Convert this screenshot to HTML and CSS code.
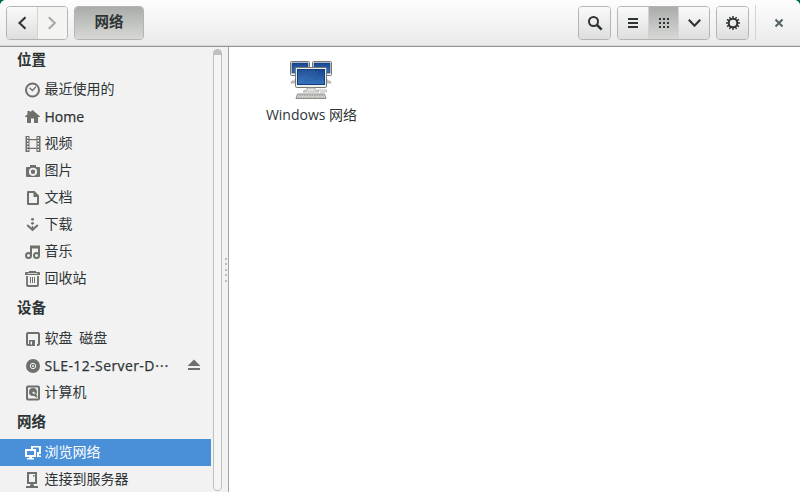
FILE: index.html
```html
<!DOCTYPE html>
<html lang="zh-CN">
<head>
<meta charset="utf-8">
<title>网络</title>
<link rel="stylesheet" href="styles.css">
</head>
<body>
<div class="window">
  <header class="toolbar">
    <div class="group nav">
      <button class="btn"><svg width="16" height="16" viewBox="0 0 16 16"><path class="line thick" d="M11.500 2.300 5.500 8l6 5.700"/></svg></button>
      <button class="btn disabled"><svg width="16" height="16" viewBox="0 0 16 16"><path class="line thick" d="M4.800 2.300 10.800 8l-6 5.700"/></svg></button>
    </div>
    <div class="group path"><button class="btn active">网络</button></div>
    <div class="spacer"></div>
    <div class="group single"><button class="btn"><svg width="16" height="16" viewBox="0 0 16 16"><circle class="line" cx="6.500" cy="6.500" r="4.500"/><path class="line handle" d="m10 10 4.700 4.700"/></svg></button></div>
    <div class="group views">
      <button class="btn"><svg width="16" height="16" viewBox="0 0 16 16"><path d="M3 3h10v2H3zM3 7h10v2H3zM3 11h10v2H3z"/></svg></button>
      <button class="btn active"><svg width="16" height="16" viewBox="0 0 16 16"><path d="M3 3h2v2H3zM7 3h2v2H7zM11 3h2v2h-2zM3 7h2v2H3zM7 7h2v2H7zM11 7h2v2h-2zM3 11h2v2H3zM7 11h2v2H7zM11 11h2v2h-2z"/></svg></button>
      <button class="btn"><svg width="16" height="16" viewBox="0 0 16 16"><path class="line thick" d="m2.800 4.800 5.700 6 5.700-6"/></svg></button>
    </div>
    <div class="group single"><button class="btn"><svg width="16" height="16" viewBox="0 0 16 16"><circle class="line" cx="8" cy="8" r="4.300"/><path class="line teeth" d="M8 1v3M8 12v3M1 8h3M12 8h3M4.500 2l1.300 2.500M11.500 2l-1.300 2.500M4.500 14l1.300-2.500M11.500 14l-1.300-2.500M2 4.500l2.500 1.300M14 4.500l-2.500 1.300M2 11.500l2.500-1.300M14 11.500l-2.500-1.300"/></svg></button></div>
    <div class="divider"></div>
    <button class="close"><svg width="16" height="16" viewBox="0 0 16 16"><path class="line" d="m4.500 4.500 7 7M11.500 4.500l-7 7"/></svg></button>
  </header>
  <div class="content">
    <aside class="sidebar">
      <nav class="places">
        <h2 class="first">位置</h2>
        <a class="place"><svg width="16" height="16" viewBox="0 0 16 16"><circle class="line" cx="7.500" cy="8" r="6.500"/><path class="line thin" d="m4.500 5.800 3 2.700 3.400-3.700"/></svg><span>最近使用的</span></a>
        <a class="place latin"><svg width="16" height="16" viewBox="0 0 16 16"><path d="M7.500 1 15 7.500V8h-2v6H9V9.500H6V14H2V8H0v-.5l2.500-2.200V2H5v1.200z"/></svg><span>Home</span></a>
        <a class="place"><svg width="16" height="16" viewBox="0 0 16 16"><path fill-rule="evenodd" d="M.5 0h4v3h7V0h4v16h-4v-3h-7v3h-4zM4.500 4.200v7.600h7V4.200zM2 1v1.500h1.500V1zm0 3v1.500h1.500V4zm0 3v1.500h1.500V7zm0 3v1.500h1.500V10zm0 3v1.500h1.500V13zm10.500-12v1.500H14V1zm0 3v1.500H14V4zm0 3v1.500H14V7zm0 3v1.500H14V10zm0 3v1.500H14V13z"/></svg><span>视频</span></a>
        <a class="place"><svg width="16" height="16" viewBox="0 0 16 16"><path fill-rule="evenodd" d="M5 2h6v2h3q1 0 1 1v8q0 1-1 1H2q-1 0-1-1V5q0-1 1-1h3zM8 4.700a4.100 4.100 0 1 0 0 8.200 4.100 4.100 0 0 0 0-8.200zm0 1.900a2.200 2.200 0 1 1 0 4.400 2.200 2.200 0 0 1 0-4.400z"/></svg><span>图片</span></a>
        <a class="place"><svg width="16" height="16" viewBox="0 0 16 16"><path fill-rule="evenodd" d="M3 1h6.500L14 5.500V14q0 1-1 1H3q-1 0-1-1V2q0-1 1-1zm1 2v10h8V7H8.500V3z"/></svg><span>文档</span></a>
        <a class="place"><svg width="16" height="16" viewBox="0 0 16 16"><path class="line" d="m2.200 8 5.300 5 5.300-5"/><circle cx="7.500" cy="2.300" r="1.400"/><circle cx="7.500" cy="6.300" r="1.400"/><path d="M6.700 9h1.600v4H6.700z"/></svg><span>下载</span></a>
        <a class="place"><svg width="16" height="16" viewBox="0 0 16 16"><path class="line" d="M6 11.500V2.500h8v9M6 3.500h8"/><circle class="line" cx="3.500" cy="11.500" r="2.500"/><circle class="line" cx="11.500" cy="11.500" r="2.500"/></svg><span>音乐</span></a>
        <a class="place"><svg width="16" height="16" viewBox="0 0 16 16"><path fill-rule="evenodd" d="M4 0h7v1h3.500l.5 1v2H0V2l.5-1H4zM2.500 2v.8h10V2zM5 6h1v6H5zM7 6h1v6H7zM9 6h1v6H9z"/><path class="line trash" d="M2 5v9q0 1 1 1h9q1 0 1-1V5"/></svg><span>回收站</span></a>
        <h2>设备</h2>
        <a class="place"><svg width="16" height="16" viewBox="0 0 16 16"><path class="line" d="M4 14H3q-1 0-1-1V3q0-1 1-1h10q1 0 1 1v10q0 1-1 1h-1"/><path fill-rule="evenodd" d="M4 9h6v6H4zm1.500 1.500v3H7v-3z"/></svg><span class="spaced">软盘 磁盘</span></a>
        <a class="place latin"><svg width="16" height="16" viewBox="0 0 16 16"><circle cx="8" cy="8" r="7"/><circle class="ring" cx="8" cy="8" r="2.700"/><circle class="dot" cx="8" cy="8" r="1"/></svg><span class="device">SLE-12-Server-D⋯</span><svg class="eject" width="16" height="16" viewBox="0 0 16 16"><path d="m8 1.500 6.500 6.500h-13zM2 10h12v2H2z"/></svg></a>
        <a class="place"><svg width="16" height="16" viewBox="0 0 16 16"><rect class="line" x="2" y="1.500" width="12" height="13" rx="1"/><circle cx="8" cy="7" r="4"/><path class="cut" d="m8 7 2 2.500"/><path class="line" d="m9 9 3 3"/></svg><span>计算机</span></a>
        <h2>网络</h2>
        <a class="place selected"><svg width="16" height="16" viewBox="0 0 16 16"><path d="M6 1h10v8h-2v1.500h2V12h-4V4H6z"/><path class="screen" d="M8 2.500h6V7h-2V4H8z"/><path class="line" d="M1 5h9v6H1z"/><path d="M4 11h3v2h2v1.500H2V13h2z"/></svg><span>浏览网络</span></a>
        <a class="place"><svg width="16" height="16" viewBox="0 0 16 16"><path class="line" d="M3 1h8v10H3zM7 11v3"/><path d="M8 3h1.500v1.500H8zM5 12.500h4V14h4v2H1v-2h4z"/></svg><span>连接到服务器</span></a>
      </nav>
      <div class="scrollbar"><div class="track"></div></div>
      <div class="grip"><i></i><i></i><i></i><i></i><i></i></div>
    </aside>
    <main class="files">
      <div class="file">
        <svg class="network" width="48" height="48" viewBox="0 0 48 48">
          <defs>
            <linearGradient id="screen" x1="0" y1="0" x2="0" y2="1"><stop offset="0" stop-color="#17458d"/><stop offset="1" stop-color="#3674bd"/></linearGradient>
            <g id="monitor"><rect x=".5" y=".5" width="19" height="14" rx="1" fill="#eee" stroke="#777"/><rect x="2" y="2" width="16" height="10" fill="url(#screen)" stroke="#123c7c" stroke-width=".6"/><path d="M8 15h4v3h3v2H5v-2h3zM2 20h16l1 2H1z" fill="#d4d5d2" stroke="#858783" stroke-width=".6"/></g>
          </defs>
          <use href="#monitor" x="3" y="5"/><use href="#monitor" x="25" y="5"/>
          <rect x="8.500" y="11.500" width="31" height="20" rx="1.300" fill="#eeeeec" stroke="#777974"/>
          <rect x="10.500" y="13.500" width="27" height="15" fill="url(#screen)" stroke="#133d7f"/>
          <path d="M11 14h17L17 25l-6 2z" fill="#7ca7dd" opacity=".12"/><path d="m28 15-8 9M31 15l-8 9" stroke="#7da8df" opacity=".2"/>
          <path d="M20 32h8v2q4 0 4 2H16q0-2 4-2z" fill="#e4e5e2" stroke="#999b96" stroke-width=".7"/>
          <path d="M31 34h8q2 1 0 2h-6" fill="none" stroke="#b6b8b4"/>
          <path d="M10.500 38h27l1.500 4.500H9z" fill="#d5d7d3" stroke="#747671" stroke-width=".8"/>
          <path d="M12 39.500h24M11 41.200h26" stroke="#999b94" stroke-width=".8" stroke-dasharray="1.500 1"/>
        </svg>
        <span>Windows 网络</span>
      </div>
    </main>
  </div>
</div>
</body>
</html>
```

FILE: styles.css
```css
* { box-sizing: border-box; }
body { margin: 0; background: #006b45; }
.window {
  display: flex;
  flex-direction: column;
  width: 800px;
  height: 492px;
  overflow: hidden;
  border-radius: 6px 6px 0 0;
  background: #fff;
  color: #2e3436;
  font: 14px/20px "Open Sans", "Noto Sans CJK SC", sans-serif;
}
svg { display: block; flex: none; fill: currentColor; }
.line { fill: none; stroke: currentColor; stroke-width: 2; }
.thick { stroke-width: 2.100; }
.handle { stroke-width: 2.500; }
.thin { stroke-width: 1.300; }
.trash { stroke-width: 1.800; }
.teeth { stroke-width: 1.500; }
.toolbar {
  display: flex;
  align-items: center;
  gap: 6px;
  flex: none;
  height: 47px;
  padding: 0 0 1px 6px;
  background: linear-gradient(#fdfdfd, #ebebeb 44px);
  border-bottom: 1px solid #949796;
  box-shadow: inset 0 -1px #d5d6d5;
}
.group {
  display: flex;
  height: 34px;
  border: 1px solid #b3b5b1;
  border-radius: 4px;
  overflow: hidden;
}
.btn {
  display: flex;
  align-items: center;
  justify-content: center;
  flex: 1;
  padding: 0;
  border: 0;
  color: #2e3436;
  background: linear-gradient(#fafafa, #dedede);
  font: bold 14.500px/20px "Open Sans", "Noto Sans CJK SC", sans-serif;
}
.path .btn { padding-bottom: 1px; }
.btn + .btn { border-left: 1px solid #d3d4d2; }
.btn.active { background: linear-gradient(#a9aca8, #d8d9d7); }
.btn.disabled { color: #a8aaa7; background: #f4f4f2; }
.nav { width: 62px; }
.path { width: 70px; }
.single { width: 33px; }
.views { width: 93px; }
.spacer { flex: 1; }
.divider { width: 1px; height: 35px; background: #d3d5d2; }
.close {
  display: flex;
  align-items: center;
  justify-content: center;
  width: 38px;
  height: 34px;
  padding: 0 4px 0 0;
  border: 0;
  background: none;
  color: #536166;
}
.content { display: flex; flex: 1; min-height: 0; }
.sidebar {
  display: flex;
  width: 229px;
  background: #f2f2f2;
  border-right: 1px solid #a2a4a2;
}
.places { width: 211px; overflow: hidden; }
.places h2 {
  height: 33px;
  margin: 0;
  padding-left: 17px;
  font-size: 14.500px;
  line-height: 32px;
}
.places .first { height: 29px; line-height: 25px; }
.place {
  display: flex;
  align-items: center;
  gap: 3.500px;
  height: 27px;
  padding-left: 25px;
  color: #2e3436;
}
.place span { padding-bottom: 2px; }
.place.latin span { padding-bottom: 0; -webkit-text-stroke: .25px currentColor; }
.place svg { color: #6e706b; }
.place.selected, .place.selected svg { color: #fff; }
.place.selected { background: #4a90d9; }
.screen { fill: #4a90d9; }
.spaced { word-spacing: 3px; }
.device { width: 125px; letter-spacing: .4px; white-space: nowrap; }
.place .eject { margin-left: 13px; }
.ring { fill: none; stroke: #f2f2f2; }
.dot { fill: #f2f2f2; }
.cut { stroke: #f2f2f2; stroke-width: 2; }
.scrollbar { width: 11px; padding: 2px 0 1px 2px; }
.track {
  height: 100%;
  border: 1px solid #bfc0be;
  border-top: 6px solid #bfc0be;
  border-radius: 5px;
  background: #f5f5f5;
}
.grip {
  display: flex;
  flex-direction: column;
  justify-content: center;
  align-items: center;
  gap: 3.500px;
  width: 6px;
}
.grip i { width: 2px; height: 2px; margin-left: 2px; background: #bdbebc; }
.files { flex: 1; background: #fff; }
.file {
  display: flex;
  flex-direction: column;
  align-items: center;
  width: 110px;
  margin: 9px 0 0 27px;
}
.file span { margin: 1px 0 0 1px; white-space: nowrap; }
```
